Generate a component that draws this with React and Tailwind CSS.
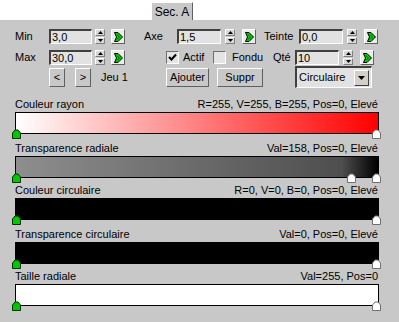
import React from "react";

const Input = ({ w, value }) => (
  <div className={`${w} h-[15px] bg-[#e2e2e2] border-t-[2px] border-l-[2px] border-t-[#404040] border-l-[#404040] border-b border-r border-b-white border-r-white flex items-center pl-[1px] leading-none`}>
    {value}
  </div>
);

const Spinner = () => (
  <div className="w-[10px] h-[15px] flex flex-col">
    <div className="h-[7px] bg-[#d8d8d8] border-t border-l border-white border-r border-b border-r-[#808080] border-b-[#808080] flex items-center justify-center">
      <svg width="5" height="3" viewBox="0 0 5 3"><polygon points="2.5,0 5,3 0,3" fill="#000" /></svg>
    </div>
    <div className="h-[1px] bg-[#c8c8c8]" />
    <div className="h-[7px] bg-[#d8d8d8] border-t border-l border-white border-r border-b border-r-[#808080] border-b-[#808080] flex items-center justify-center">
      <svg width="5" height="3" viewBox="0 0 5 3"><polygon points="0,0 5,0 2.5,3" fill="#000" /></svg>
    </div>
  </div>
);

const GreenBtn = () => (
  <div className="w-[14px] h-[15px] bg-[#ececec] border border-t-white border-l-white border-r-[#606060] border-b-[#606060] flex items-center justify-center">
    <svg width="9" height="10" viewBox="0 0 9 10">
      <path d="M0.5 0.5 H4 L8.5 5 L4 9.5 H0.5 L2.5 5 Z" fill="#00d000" stroke="#000" strokeWidth="1" />
      <path d="M3 2.5 L5.5 5 L3 7.5" fill="none" stroke="#006000" strokeWidth="1" />
    </svg>
  </div>
);

const Btn = ({ w, children }) => (
  <div className={`${w} h-[19px] bg-[#c8c8c8] border border-t-white border-l-white border-r-[#606060] border-b-[#606060] flex items-center justify-center leading-none`}>
    {children}
  </div>
);

const Checkbox = ({ checked }) => (
  <div className="w-[13px] h-[13px] bg-[#e4e4e4] border-t border-l border-t-[#707070] border-l-[#707070] border-b border-r border-b-white border-r-white flex items-center justify-center">
    {checked && (
      <svg width="9" height="9" viewBox="0 0 9 9">
        <path d="M1 4 L3.5 6.5 L8 1.5" fill="none" stroke="#000" strokeWidth="2" />
      </svg>
    )}
  </div>
);

const Marker = ({ green, pos }) => (
  <svg className={`absolute ${pos}`} width="9" height="10" viewBox="0 0 9 10">
    <path
      d="M0.5 9.5 V4 L3 1 H6 L8.5 4 V9.5 Z"
      fill={green ? "#00c800" : "#ffffff"}
      stroke={green ? "#003000" : "#707070"}
      strokeWidth="1"
    />
  </svg>
);

const Section = ({ mt, label, right, barClass, markers }) => (
  <div className={`${mt} w-[364px]`}>
    <div className="h-[14px] flex items-end justify-between pb-[2px] leading-[12px] pr-[1px]">
      <span>{label}</span>
      <span>{right}</span>
    </div>
    <div className="relative">
      <div className={`h-[22px] border border-black ${barClass}`} />
      {markers}
    </div>
  </div>
);

export default function App() {
  return (
    <div className="w-[399px] h-[322px] bg-white text-[11px] text-black font-['Liberation_Sans',Arial,sans-serif] overflow-hidden">
      <div className="h-[20px] flex items-end pl-[151px]">
        <div className="w-[42px] h-[18px] bg-[#c8c8c8] border-t border-l border-t-white border-l-white border-r border-r-[#606060] flex items-center justify-center leading-none text-[12px]">
          Sec. A
        </div>
      </div>
      <div className="h-[302px] bg-[#c8c8c8] pl-[15px] flex flex-col">
        {/* Row 1 */}
        <div className="mt-[9px] h-[15px] flex items-center">
          <div className="w-[34px]">Min</div>
          <Input w="w-[43px]" value="3,0" />
          <div className="w-[3px]" />
          <Spinner />
          <div className="w-[6px]" />
          <GreenBtn />
          <div className="w-[19px]" />
          <div className="w-[33px]">Axe</div>
          <Input w="w-[44px]" value="1,5" />
          <div className="w-[4px]" />
          <Spinner />
          <div className="w-[7px]" />
          <GreenBtn />
          <div className="w-[8px]" />
          <div className="w-[35px]">Teinte</div>
          <Input w="w-[44px]" value="0,0" />
          <div className="w-[4px]" />
          <Spinner />
          <div className="w-[7px]" />
          <GreenBtn />
        </div>
        {/* Row 2 */}
        <div className="mt-[6px] h-[15px] flex items-center">
          <div className="w-[34px]">Max</div>
          <Input w="w-[43px]" value="30,0" />
          <div className="w-[3px]" />
          <Spinner />
          <div className="w-[6px]" />
          <GreenBtn />
          <div className="w-[41px]" />
          <Checkbox checked />
          <div className="w-[4px]" />
          <div className="w-[30px]">Actif</div>
          <Checkbox />
          <div className="w-[6px]" />
          <div className="w-[41px]">Fondu</div>
          <div className="w-[22px]">Qté</div>
          <Input w="w-[44px]" value="10" />
          <div className="w-[4px]" />
          <Spinner />
          <div className="w-[7px]" />
          <GreenBtn />
        </div>
        {/* Row 3 */}
        <div className="mt-[1px] h-[22px] flex items-center">
          <div className="w-[34px]" />
          <Btn w="w-[16px]">&lt;</Btn>
          <div className="w-[10px]" />
          <Btn w="w-[16px]">&gt;</Btn>
          <div className="w-[10px]" />
          <div className="w-[65px]">Jeu 1</div>
          <Btn w="w-[43px]">Ajouter</Btn>
          <div className="w-[8px]" />
          <Btn w="w-[46px]">Suppr</Btn>
          <div className="w-[32px]" />
          <div className="w-[77px] h-[22px] bg-[#e2e2e2] border-t-[2px] border-l-[2px] border-t-[#404040] border-l-[#404040] border-b border-r border-b-white border-r-white flex items-center justify-between pl-[2px] pr-[2px]">
            <span className="leading-none">Circulaire</span>
            <div className="w-[15px] h-[16px] bg-[#d4d0c8] border border-t-white border-l-white border-r-[#404040] border-b-[#404040] flex items-center justify-center">
              <svg width="7" height="4" viewBox="0 0 7 4"><polygon points="0,0 7,0 3.5,4" fill="#000" /></svg>
            </div>
          </div>
        </div>

        <Section
          mt="mt-[10px]"
          label="Couleur rayon"
          right="R=255, V=255, B=255, Pos=0, Elevé"
          barClass="bg-[linear-gradient(to_right,#ffffff,#ff0000)]"
          markers={
            <>
              <Marker green pos="left-[-3px] top-[17px]" />
              <Marker pos="left-[357px] top-[17px]" />
            </>
          }
        />
        <Section
          mt="mt-[8px]"
          label="Transparence radiale"
          right="Val=158, Pos=0, Elevé"
          barClass="bg-[linear-gradient(to_right,#8e8e8e,#4e4e4e_90%,#000000)]"
          markers={
            <>
              <Marker green pos="left-[-3px] top-[17px]" />
              <Marker pos="left-[332px] top-[17px]" />
              <Marker pos="left-[357px] top-[17px]" />
            </>
          }
        />
        <Section
          mt="mt-[6px]"
          label="Couleur circulaire"
          right="R=0, V=0, B=0, Pos=0, Elevé"
          barClass="bg-black"
          markers={
            <>
              <Marker green pos="left-[-3px] top-[17px]" />
              <Marker pos="left-[357px] top-[17px]" />
            </>
          }
        />
        <Section
          mt="mt-[8px]"
          label="Transparence circulaire"
          right="Val=0, Pos=0, Elevé"
          barClass="bg-black"
          markers={
            <>
              <Marker green pos="left-[-3px] top-[17px]" />
              <Marker pos="left-[357px] top-[17px]" />
            </>
          }
        />
        <Section
          mt="mt-[6px]"
          label="Taille radiale"
          right="Val=255, Pos=0"
          barClass="bg-white"
          markers={
            <>
              <Marker green pos="left-[-3px] top-[17px]" />
              <Marker pos="left-[357px] top-[17px]" />
            </>
          }
        />
      </div>
    </div>
  );
}
